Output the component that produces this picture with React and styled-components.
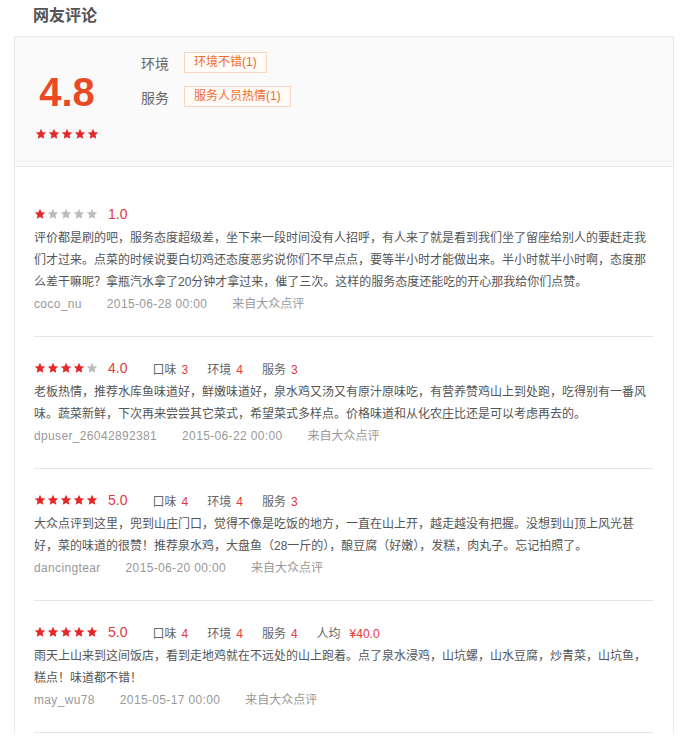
import styled, { createGlobalStyle } from "styled-components";

const GlobalStyle = createGlobalStyle`
  body {
    margin: 0;
    background: #fff;
    font-family: "Liberation Sans", "Noto Sans CJK SC", sans-serif;
  }
`;

const reviews = [
  {
    stars: 1,
    score: "1.0",
    items: [],
    text: "评价都是刷的吧，服务态度超级差，坐下来一段时间没有人招呼，有人来了就是看到我们坐了留座给别人的要赶走我们才过来。点菜的时候说要白切鸡还态度恶劣说你们不早点点，要等半小时才能做出来。半小时就半小时啊，态度那么差干嘛呢？拿瓶汽水拿了20分钟才拿过来，催了三次。这样的服务态度还能吃的开心那我给你们点赞。",
    user: "coco_nu",
    date: "2015-06-28 00:00",
  },
  {
    stars: 4,
    score: "4.0",
    items: [
      ["口味", "3"],
      ["环境", "4"],
      ["服务", "3"],
    ],
    text: "老板热情，推荐水库鱼味道好，鲜嫩味道好，泉水鸡又汤又有原汁原味吃，有营养赞鸡山上到处跑，吃得别有一番风味。蔬菜新鲜，下次再来尝尝其它菜式，希望菜式多样点。价格味道和从化农庄比还是可以考虑再去的。",
    user: "dpuser_26042892381",
    date: "2015-06-22 00:00",
  },
  {
    stars: 5,
    score: "5.0",
    items: [
      ["口味", "4"],
      ["环境", "4"],
      ["服务", "3"],
    ],
    text: "大众点评到这里，兜到山庄门口，觉得不像是吃饭的地方，一直在山上开，越走越没有把握。没想到山顶上风光甚好，菜的味道的很赞！推荐泉水鸡，大盘鱼（28一斤的），酿豆腐（好嫩），发糕，肉丸子。忘记拍照了。",
    user: "dancingtear",
    date: "2015-06-20 00:00",
  },
  {
    stars: 5,
    score: "5.0",
    items: [
      ["口味", "4"],
      ["环境", "4"],
      ["服务", "4"],
      ["人均", "¥40.0", true],
    ],
    text: "雨天上山来到这间饭店，看到走地鸡就在不远处的山上跑着。点了泉水浸鸡，山坑螺，山水豆腐，炒青菜，山坑鱼，糕点！味道都不错！",
    user: "may_wu78",
    date: "2015-05-17 00:00",
  },
];

const Stars = ({ count }) => (
  <StarRow>
    {[0, 1, 2, 3, 4].map((i) => (
      <Star key={i} viewBox="0 0 24 24" $on={i < count}>
        <polygon points="12,1.5 15.1,8.3 22.5,9.1 17,14.1 18.5,21.5 12,17.8 5.5,21.5 7,14.1 1.5,9.1 8.9,8.3" />
      </Star>
    ))}
  </StarRow>
);

const App = () => {
  return (
    <Page>
      <GlobalStyle />
      <Title>网友评论</Title>
      <Box>
        <Summary>
          <ScoreCol>
            <BigScore>4.8</BigScore>
            <Stars count={5} />
          </ScoreCol>
          <TagList>
            <TagRow>
              <TagLabel>环境</TagLabel>
              <Tag>环境不错(1)</Tag>
            </TagRow>
            <TagRow>
              <TagLabel>服务</TagLabel>
              <Tag>服务人员热情(1)</Tag>
            </TagRow>
          </TagList>
        </Summary>

        <List>
          {reviews.map((r) => (
            <Review key={r.user}>
              <RatingRow>
                <Stars count={r.stars} />
                <Score>{r.score}</Score>
                <Items>
                  {r.items.map(([label, value, wide]) => (
                    <Item key={label}>
                      {label}
                      <ItemValue $wide={wide}>{value}</ItemValue>
                    </Item>
                  ))}
                </Items>
              </RatingRow>
              <Text>{r.text}</Text>
              <Meta>
                <MetaPart $latin>{r.user}</MetaPart>
                <MetaPart $latin>{r.date}</MetaPart>
                <MetaPart>来自大众点评</MetaPart>
              </Meta>
            </Review>
          ))}
        </List>
      </Box>
    </Page>
  );
};

const Page = styled.div`
  width: 660px;
  margin-left: 14px;
`;

const Title = styled.h2`
  margin: 0;
  padding: 5px 0 9px 19px;
  font-size: 16px;
  line-height: 22px;
  font-weight: 700;
  color: #555;
`;

const Box = styled.div`
  border: 1px solid #e8e8e8;
  border-bottom: none;
`;

const Summary = styled.div`
  display: flex;
  height: 129px;
  padding: 0 20px 0 19px;
  background: #fafafa;
  border-bottom: 1px solid #e6e6e6;
  box-shadow: inset 0 -4px 0 #fafafa, inset 0 -5px 0 #f0f0f0;
`;

const ScoreCol = styled.div`
  width: 66px;
  display: flex;
  flex-direction: column;
  align-items: center;
  padding-top: 35px;
`;

const BigScore = styled.div`
  font-size: 40px;
  line-height: 40px;
  font-weight: 700;
  color: #ea4a22;
  margin-bottom: 16px;
`;

const StarRow = styled.span`
  display: inline-flex;
  gap: 1px;
`;

const Star = styled.svg`
  width: 12px;
  height: 12px;
  fill: ${(p) => (p.$on ? "#e4282a" : "#bcbcbc")};
`;

const TagList = styled.div`
  display: flex;
  flex-direction: column;
  gap: 13px;
  margin-left: 41px;
  padding-top: 15px;
`;

const TagRow = styled.div`
  display: flex;
  align-items: center;
  height: 21px;
`;

const TagLabel = styled.span`
  width: 43px;
  font-size: 14px;
  color: #666;
`;

const Tag = styled.span`
  box-sizing: border-box;
  height: 21px;
  padding: 0 9px;
  border: 1px solid #f7d6c2;
  background: #fffbf8;
  color: #f26b2b;
  font-size: 12px;
  line-height: 19px;
`;

const List = styled.div`
  padding: 16px 20px 0 19px;
`;

const Review = styled.div`
  padding: 19px 0 21px;
  border-bottom: 1px solid #e5e5e5;
`;

const RatingRow = styled.div`
  display: flex;
  align-items: center;
  height: 24px;
  margin-bottom: 1px;
`;

const Score = styled.span`
  margin-left: 10px;
  font-size: 14px;
  color: #e4393c;
`;

const Items = styled.div`
  display: flex;
  gap: 19px;
  margin-left: 25px;
`;

const Item = styled.span`
  font-size: 12px;
  color: #666;
`;

const ItemValue = styled.span`
  margin-left: ${(p) => (p.$wide ? "9px" : "5px")};
  color: #e4393c;
`;

const Text = styled.p`
  margin: 0;
  font-size: 12px;
  line-height: 22px;
  color: #555;
`;

const Meta = styled.div`
  display: flex;
  gap: 25px;
  font-size: 12px;
  line-height: 22px;
  color: #999;
`;

const MetaPart = styled.span`
  letter-spacing: ${(p) => (p.$latin ? "0.35px" : "0")};
`;

export default App;
